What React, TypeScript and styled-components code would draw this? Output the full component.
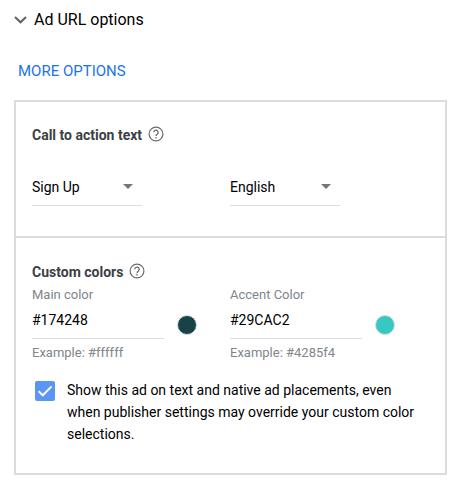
import React, { useState } from "react";
import styled, { createGlobalStyle } from "styled-components";

const GlobalStyle = createGlobalStyle`
  *, *::before, *::after { box-sizing: border-box; }
  body {
    margin: 0;
    background: #fff;
    color: #000;
    font: 14px/22px Roboto, "Liberation Sans", sans-serif;
  }
  button, input, select { font: inherit; color: inherit; }
`;

const Page = styled.main`
  padding: 9px 12px 6px 14px;
`;

const Disclosure = styled.button`
  display: flex;
  align-items: center;
  gap: 7px;
  padding: 0;
  border: 0;
  background: none;
  font-size: 16px;
  line-height: 22px;
  cursor: pointer;
`;

const MoreOptions = styled.button`
  display: block;
  margin: 29px 0 18px;
  padding: 0 4px;
  border: 0;
  background: none;
  color: #1a73e8;
  font-size: 15px;
  line-height: 22px;
  cursor: pointer;
`;

const Panel = styled.div`
  border: 2px solid #dadce0;
`;

const Section = styled.section`
  padding: 23px 17px 30px 16px;

  & + & {
    border-top: 2px solid #dadce0;
    padding-top: 24px;
    padding-bottom: 28px;
  }
`;

const Heading = styled.h2`
  display: flex;
  align-items: center;
  gap: 6px;
  margin: 0;
  color: #3c4043;
  font-size: 14px;
  font-weight: 700;
  line-height: 20px;
`;

const HelpButton = styled.button`
  display: flex;
  margin-bottom: 2px;
  padding: 0;
  border: 0;
  background: none;
  color: #6b6b6b;
  cursor: pointer;
`;

const Columns = styled.div<{ $top: number }>`
  display: grid;
  grid-template-columns: 1fr 1fr;
  margin-top: ${(p) => p.$top}px;
`;

const SelectWrap = styled.div`
  display: grid;
  align-items: center;
  width: 110px;
  border-bottom: 1px solid #dadce0;

  > * { grid-area: 1 / 1; }
  > svg { justify-self: end; margin-right: 9px; pointer-events: none; }
`;

const Select = styled.select`
  appearance: none;
  width: 100%;
  height: 37px;
  padding: 0;
  border: 0;
  background: none;
  outline-offset: 2px;
`;

const Field = styled.div`
  display: flex;
  flex-direction: column;
  color: #80868b;
  font-size: 13px;
  line-height: 20px;
`;

const Hint = styled.span`
  margin-top: 4px;
`;

const ColorRow = styled.div`
  display: flex;
  align-items: center;
  gap: 13px;
`;

const ColorInput = styled.input`
  width: 132px;
  height: 34px;
  padding: 0 0 3px;
  border: 0;
  border-bottom: 1px solid #dadce0;
  border-radius: 0;
  background: none;
  color: #000;
  font-size: 14px;
`;

const Swatch = styled.button<{ $color: string }>`
  width: 20px;
  height: 20px;
  margin-top: 6px;
  padding: 0;
  border: 1px solid #dadce0;
  border-radius: 50%;
  background: ${(p) => p.$color};
  cursor: pointer;
`;

const CheckLabel = styled.label`
  display: flex;
  align-items: flex-start;
  gap: 12px;
  margin-top: 16px;
  padding-left: 3px;
  cursor: pointer;
`;

const CheckBox = styled.span`
  display: grid;
  flex: none;
  width: 20px;
  height: 20px;
  margin-top: 2px;

  > * { grid-area: 1 / 1; }
  > svg { pointer-events: none; }
`;

const CheckInput = styled.input`
  appearance: none;
  width: 20px;
  height: 20px;
  margin: 0;
  border: 2px solid #80868b;
  border-radius: 2px;

  &:checked { border-color: #5b96f5; background: #5b96f5; }
`;

const Chevron = () => (
  <svg width="13" height="8" viewBox="0 0 13 8" fill="none" aria-hidden="true">
    <path d="M1 1l5.5 5.3L12 1" stroke="#5f6368" strokeWidth="2" />
  </svg>
);

const Help = ({ topic }: { topic: string }) => (
  <HelpButton type="button" aria-label={`Help: ${topic}`}>
    <svg width="16" height="16" viewBox="0 0 16 16" fill="none" stroke="currentColor" aria-hidden="true">
      <circle cx="8" cy="8" r="6.9" strokeWidth="1.2" />
      <path d="M5.8 6.3a2.2 2.2 0 1 1 3.6 1.7C8.6 8.6 8 8.9 8 10" strokeWidth="1.25" />
      <path d="M8 11v1.4" strokeWidth="1.3" />
    </svg>
  </HelpButton>
);

const Dropdown = ({ label, options }: { label: string; options: string[] }) => (
  <SelectWrap>
    <Select aria-label={label}>
      {options.map((o) => (
        <option key={o}>{o}</option>
      ))}
    </Select>
    <svg width="10" height="5" viewBox="0 0 10 5" aria-hidden="true">
      <path d="M0 0h10L5 5z" fill="#757575" />
    </svg>
  </SelectWrap>
);

interface ColorFieldProps {
  id: string;
  label: string;
  initial: string;
  color: string;
  example: string;
}

const ColorField = ({ id, label, initial, color, example }: ColorFieldProps) => (
  <Field>
    <label htmlFor={id}>{label}</label>
    <ColorRow>
      <ColorInput id={id} defaultValue={initial} aria-describedby={`${id}-hint`} />
      <Swatch type="button" $color={color} aria-label={`Pick ${label}`} />
    </ColorRow>
    <Hint id={`${id}-hint`}>Example: {example}</Hint>
  </Field>
);

export default function App() {
  const [checked, setChecked] = useState(true);
  return (
    <>
      <GlobalStyle />
      <Page>
        <Disclosure type="button" aria-expanded="true">
          <Chevron />
          Ad URL options
        </Disclosure>
        <MoreOptions type="button">MORE OPTIONS</MoreOptions>
        <Panel>
          <Section>
            <Heading>
              Call to action text <Help topic="Call to action text" />
            </Heading>
            <Columns $top={23}>
              <Dropdown label="Call to action" options={["Sign Up", "Learn More"]} />
              <Dropdown label="Language" options={["English", "Spanish"]} />
            </Columns>
          </Section>
          <Section>
            <Heading>
              Custom colors <Help topic="Custom colors" />
            </Heading>
            <Columns $top={3}>
              <ColorField id="main-color" label="Main color" initial="#174248" color="#174248" example="#ffffff" />
              <ColorField id="accent-color" label="Accent Color" initial="#29CAC2" color="#35c9c1" example="#4285f4" />
            </Columns>
            <CheckLabel>
              <CheckBox>
                <CheckInput type="checkbox" checked={checked} onChange={(e) => setChecked(e.target.checked)} />
                {checked && (
                  <svg width="20" height="20" viewBox="0 0 20 20" fill="none" aria-hidden="true">
                    <path d="M3.6 10.2l4.2 4.1L16.6 5.4" stroke="#fff" strokeWidth="2" />
                  </svg>
                )}
              </CheckBox>
              <span>
                Show this ad on text and native ad placements, even when publisher settings may override your custom
                color selections.
              </span>
            </CheckLabel>
          </Section>
        </Panel>
      </Page>
    </>
  );
}
